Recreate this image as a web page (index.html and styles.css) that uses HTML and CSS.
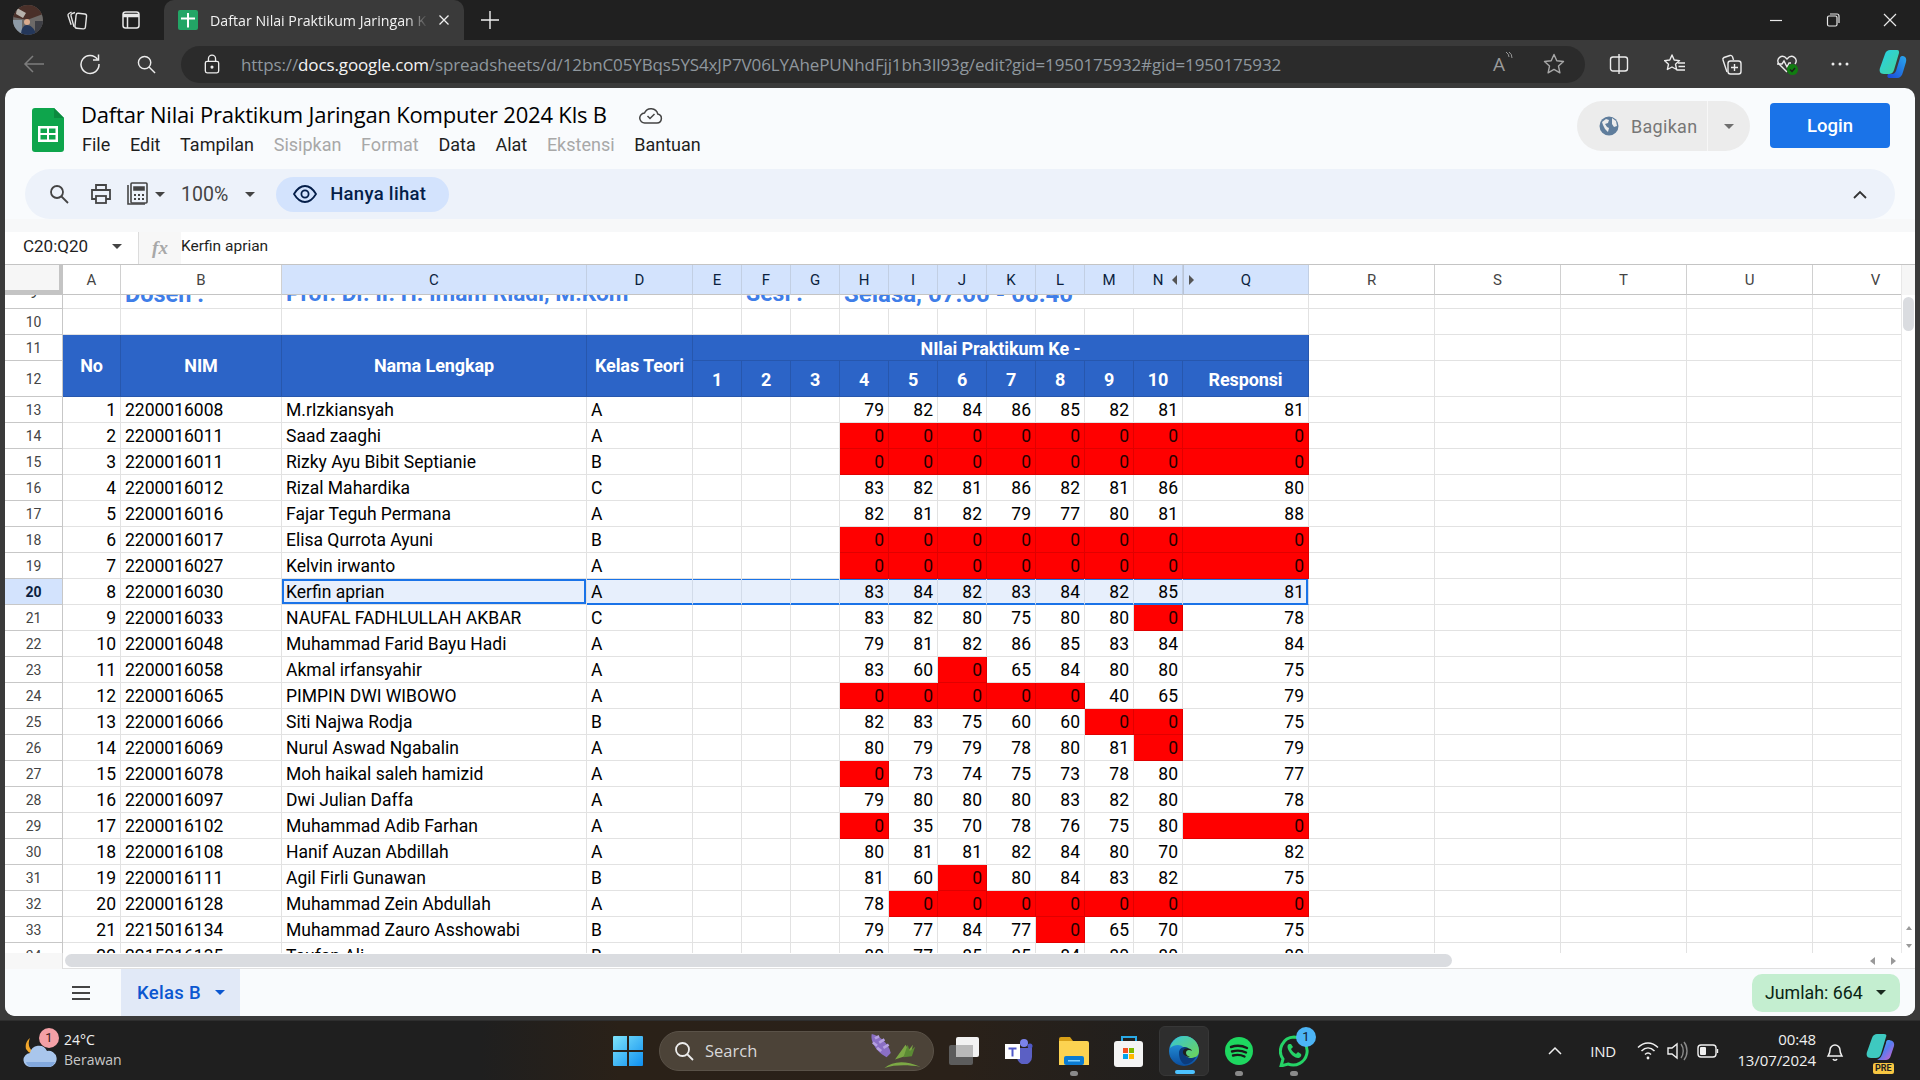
FILE: index.html
```html
<!DOCTYPE html>
<html lang="id">
<head>
<meta charset="utf-8">
<title>Daftar Nilai Praktikum Jaringan Komputer 2024 Kls B</title>
<link rel="stylesheet" href="styles.css">
</head>
<body>
<div class="tabbar">
  <div class="avatar"><svg viewBox="0 0 30 30" width="30" height="30"><defs><clipPath id="av"><circle cx="15" cy="15" r="15"/></clipPath></defs><g clip-path="url(#av)"><rect width="30" height="30" fill="#6d6a68"/><path d="M0 0h30v9L14 15 0 12z" fill="#4a3029"/><path d="M4 3l9 5-3 5-7-4z" fill="#b7b2ac"/><rect x="0" y="15" width="9" height="15" fill="#8d9aa6"/><circle cx="14" cy="17" r="3" fill="#d9ab8e"/><path d="M8 30c0-7 3-10 6-10s8 3 9 10z" fill="#24375a"/><rect x="22" y="16" width="8" height="14" fill="#3e3f45"/></g></svg></div>
  <div class="tb-btn tb-coll"><svg viewBox="0 0 24 24" width="24" height="24" fill="none" stroke="#e4e4e4" stroke-width="1.4"><rect x="10.5" y="5.5" width="10.5" height="15" rx="2" transform="rotate(6 15 13)"/><path d="M10 4.5l-3 1.2c-1 .5-1.3 1.2-1 2.2l3 11M6.6 4L4 5.5c-1 .6-1.2 1.3-.9 2.2l3 9"/></svg></div>
  <div class="tb-btn tb-view"><svg viewBox="0 0 20 20" width="20" height="20" fill="none" stroke="#e8e8e8" stroke-width="1.5"><rect x="2" y="2" width="16" height="16" rx="2.5"/><path d="M2 5.5h16" stroke-width="3.5"/><path d="M6.5 6v12"/></svg></div>
  <div class="tab">
    <svg class="favicon" viewBox="0 0 20 20" width="20" height="20"><rect width="20" height="20" rx="2" fill="#23a566"/><path d="M3 7.5h14v2H11v8H9v-8H3z" fill="#fff"/><rect x="9" y="3" width="2" height="5" fill="#fff"/></svg>
    <span class="tab-title">Daftar Nilai Praktikum Jaringan K</span>
    <svg class="tab-x" viewBox="0 0 12 12" width="12" height="12" fill="none" stroke="#f0f0f0" stroke-width="1.3"><path d="M1.5 1.5l9 9M10.5 1.5l-9 9"/></svg>
  </div>
  <svg class="tab-plus" viewBox="0 0 18 18" width="18" height="18" fill="none" stroke="#f0f0f0" stroke-width="1.4"><path d="M9 0v18M0 9h18"/></svg>
  <div class="win-ctrl">
    <svg viewBox="0 0 14 14" width="14" height="14" fill="none" stroke="#e8e8e8" stroke-width="1.2"><path d="M1 7.5h12"/></svg>
    <svg viewBox="0 0 14 14" width="14" height="14" fill="none" stroke="#e8e8e8" stroke-width="1.2"><rect x="1.5" y="3" width="9.5" height="10" rx="1.5"/><path d="M4 1h7a2 2 0 012 2v7"/></svg>
    <svg viewBox="0 0 14 14" width="14" height="14" fill="none" stroke="#e8e8e8" stroke-width="1.2"><path d="M1 1l12 12M13 1L1 13"/></svg>
  </div>
</div>

<div class="addrbar">
  <div class="nav-btn"><svg viewBox="0 0 22 20" width="22" height="20" fill="none" stroke="#7d7d7d" stroke-width="1.5"><path d="M21 10H2M10 2l-8 8 8 8"/></svg></div>
  <div class="nav-btn"><svg viewBox="0 0 22 22" width="22" height="22" fill="none" stroke="#ececec" stroke-width="1.5"><path d="M18.5 6.5A9 9 0 1020 11"/><path d="M19.5 1.5v5.5H14"/></svg></div>
  <div class="nav-btn"><svg viewBox="0 0 20 20" width="19" height="19" fill="none" stroke="#ececec" stroke-width="1.5"><circle cx="8" cy="8" r="6.5"/><path d="M12.7 12.7L19 19"/></svg></div>
  <div class="url-pill">
    <svg class="lock" viewBox="0 0 18 22" width="16" height="20" fill="none" stroke="#ececec" stroke-width="1.5"><rect x="1.5" y="8" width="15" height="13" rx="2"/><path d="M5 8V5a4 4 0 018 0v3"/><circle cx="9" cy="14.5" r="1" fill="#ececec"/></svg>
    <span class="url"><span class="url-dim">https://</span><span class="url-host">docs.google.com</span><span class="url-dim">/spreadsheets/d/12bnC05YBqs5YS4xJP7V06LYAhePUNhdFjj1bh3Il93g/edit?gid=1950175932#gid=1950175932</span></span>
    <span class="read-aloud">A<svg viewBox="0 0 8 12" width="8" height="12" fill="none" stroke="#9a9a9a" stroke-width="1"><path d="M1 1q3 2 3 5M4 1q3 2 3 6"/></svg></span>
    <svg class="url-star" viewBox="0 0 22 22" width="22" height="22" fill="none" stroke="#a8a8a8" stroke-width="1.4" stroke-linejoin="round"><path d="M11 1.5l2.8 6.3 6.7.7-5 4.6 1.4 6.7L11 16.4l-5.9 3.4 1.4-6.7-5-4.6 6.7-.7z"/></svg>
  </div>
  <div class="ext-group">
    <div class="ext-btn"><svg viewBox="0 0 20 20" width="20" height="20" fill="none" stroke="#ececec" stroke-width="1.4"><rect x="1.5" y="3" width="17" height="14" rx="2.5"/><path d="M10 0v20"/></svg></div>
    <div class="ext-btn"><svg viewBox="0 0 22 20" width="22" height="20" fill="none" stroke="#ececec" stroke-width="1.4" stroke-linejoin="round"><path d="M8 1l2.2 5 5.3.6-4 3.6 1.1 5.3L8 13l-4.6 2.5 1.1-5.3-4-3.6L5.8 6z"/><path d="M14 9h7M14.5 12.5h6.5M12.5 16h8.5"/></svg></div>
    <div class="ext-btn"><svg viewBox="0 0 22 22" width="22" height="22" fill="none" stroke="#ececec" stroke-width="1.4"><path d="M7 19L3 7c-.4-1 0-2 1-2.500L10 2.500c1-.3 2 .2 2.500 1.200L13.500 7"/><rect x="8" y="8" width="13" height="13" rx="2.5"/><path d="M14.5 11v7M11 14.5h7"/></svg></div>
    <div class="ext-btn"><svg viewBox="0 0 24 24" width="24" height="24" fill="none" stroke="#ececec" stroke-width="1.4"><path d="M12 20L4 12c-4-5 3-11 8-5 5-6 12 0 8 5"/><path d="M2 12h5l2-3 3 6 2-4h2"/><circle cx="17.5" cy="17.5" r="5.5" fill="#107c10" stroke="none"/><path d="M15 17.5l2 2 3-3.500" stroke="#1c1c1c"/></svg></div>
    <div class="ext-btn ext-dots"><svg viewBox="0 0 18 4" width="18" height="4" fill="#ececec"><circle cx="2" cy="2" r="1.5"/><circle cx="9" cy="2" r="1.5"/><circle cx="16" cy="2" r="1.5"/></svg></div>
    <div class="ext-btn ext-copilot"><svg viewBox="0 0 30 30" width="30" height="30"><defs><linearGradient id="cpa" x1="0" y1="0" x2="1" y2="1"><stop offset="0" stop-color="#27d0e8"/><stop offset="1" stop-color="#43d49a"/></linearGradient><linearGradient id="cpb" x1="1" y1="0" x2="0" y2="1"><stop offset="0" stop-color="#2aa8ec"/><stop offset="1" stop-color="#1a47d8"/></linearGradient></defs><path d="M12 1h7c2 0 2 1 2 3l-5 17c-1 3-3 4-5 4H6c-4 0-5-3-4-6L7 5c1-3 3-4 5-4z" fill="url(#cpa)"/><path d="M24 7c3 0 5 2 4 6l-3 10c-1 4-3 6-6 6h-7c-3 0-3-2-2-4h4c2 0 3-1 4-3l4-13c0-1 1-2 2-2z" fill="url(#cpb)"/></svg></div>
  </div>
</div>

<main class="window">
  <header class="appbar">
    <svg class="sheets-logo" viewBox="0 0 32 44" width="32" height="44"><path d="M3 0h19l10 10v31a3 3 0 01-3 3H3a3 3 0 01-3-3V3a3 3 0 013-3z" fill="#0ea54c"/><path d="M22 0l10 10H22z" fill="#0b8a3f"/><path d="M6 18h20v16H6z" fill="#fff"/><path d="M8.5 20.5h6.5V25H8.500zM17 20.5h6.500V25H17zM8.500 27H15v4.500H8.500zM17 27h6.500v4.500H17z" fill="#0ea54c"/></svg>
    <div class="doc-head">
      <div class="doc-title-row">
        <span class="doc-title">Daftar Nilai Praktikum Jaringan Komputer 2024 Kls B</span>
        <svg class="cloud" viewBox="0 0 24 20" width="24" height="20" fill="none" stroke="#444" stroke-width="1.5"><path d="M6 18h12a4.500 4.500 0 00.8-8.900A7 7 0 005.500 8 5 5 0 006 18z"/><path d="M8.500 11l2.500 2.500 4.500-4.500"/></svg>
      </div>
      <nav class="menu">
        <span>File</span><span>Edit</span><span>Tampilan</span><span class="off">Sisipkan</span><span class="off">Format</span><span>Data</span><span>Alat</span><span class="off">Ekstensi</span><span>Bantuan</span>
      </nav>
    </div>
    <div class="share">
      <div class="share-main"><svg viewBox="0 0 20 20" width="20" height="20"><circle cx="10" cy="10" r="9.5" fill="#5f7d9c"/><path d="M3 6l4-3 3 1-1 3-3 1 2 3 2 1-1 4-3-3-2-4zM13 2l4 3 1 5-3 1-2-3z" fill="#ececec"/></svg><span>Bagikan</span></div>
      <div class="share-caret"><i class="caret caret-gray"></i></div>
    </div>
    <button class="login">Login</button>
  </header>

  <div class="toolbar">
    <svg class="tool t-search" viewBox="0 0 20 20" width="20" height="20" fill="none" stroke="#444" stroke-width="1.8"><circle cx="8" cy="8" r="6"/><path d="M12.5 12.5L19 19"/></svg>
    <svg class="tool t-print" viewBox="0 0 22 22" width="22" height="22" fill="none" stroke="#444" stroke-width="1.8"><path d="M6 7V2h10v5M6 16H2V7h18v9h-4"/><rect x="6" y="13" width="10" height="7"/></svg>
    <svg class="tool t-calc" viewBox="0 0 22 24" width="22" height="24" fill="none" stroke="#444" stroke-width="1.6"><path d="M2 3v19h17"/><rect x="5" y="1" width="16" height="20" rx="1"/><path d="M8 5h10v3H8z" fill="#444"/><path d="M8 12h2v2H8zM12 12h2v2h-2zM16 12h2v2h-2zM8 16h2v2H8zM12 16h2v2h-2zM16 16h2v2h-2z" fill="#444" stroke="none"/></svg>
    <i class="caret caret-dark t-caret1"></i>
    <span class="zoom-val">100%</span>
    <i class="caret caret-dark t-caret2"></i>
    <div class="view-pill">
      <svg viewBox="0 0 24 18" width="24" height="18" fill="none" stroke="#041e49" stroke-width="1.8"><path d="M1 9c3-5 7-8 11-8s8 3 11 8c-3 5-7 8-11 8S4 14 1 9z"/><circle cx="12" cy="9" r="3.6"/></svg>
      <span>Hanya lihat</span>
    </div>
    <svg class="t-chevron" viewBox="0 0 14 9" width="14" height="9" fill="none" stroke="#333" stroke-width="1.8"><path d="M1 8l6-6 6 6"/></svg>
  </div>

  <div class="formula">
    <div class="namebox"><span>C20:Q20</span><i class="caret caret-dark"></i></div>
    <div class="fx"><span>fx</span></div>
    <div class="formula-text">Kerfin aprian</div>
  </div>

  <div class="sheet">
    <div class="viewport">
      <table class="grid">
        <colgroup>
          <col class="c-head"><col class="c-a"><col class="c-b"><col class="c-c"><col class="c-d">
          <col class="c-s"><col class="c-s"><col class="c-s"><col class="c-s"><col class="c-s"><col class="c-s"><col class="c-s"><col class="c-s"><col class="c-s"><col class="c-s">
          <col class="c-w"><col class="c-w"><col class="c-w"><col class="c-w"><col class="c-w"><col class="c-w">
        </colgroup>
        <thead>
          <tr class="r-cols">
            <th class="corner"></th><th>A</th><th>B</th><th class="sel">C</th><th class="sel">D</th><th class="sel">E</th><th class="sel">F</th><th class="sel">G</th><th class="sel">H</th><th class="sel">I</th><th class="sel">J</th><th class="sel">K</th><th class="sel">L</th><th class="sel">M</th><th class="sel hid-n">N<i class="arrow-l"></i></th><th class="sel hid-q"><i class="arrow-r"></i>Q</th><th>R</th><th>S</th><th>T</th><th>U</th><th>V</th>
          </tr>
        </thead>
        <tbody>
          <tr class="r-9"><th><div class="clip"><span class="rn9">9</span></div></th><td></td><td><div class="clip"><span class="big big-dosen">Dosen :</span></div></td><td colspan="2"><div class="clip"><span class="big big-prof">Prof. Dr. Ir. H. Imam Riadi, M.Kom</span></div></td><td></td><td colspan="2"><div class="clip"><span class="big">Sesi :</span></div></td><td colspan="7"><div class="clip"><span class="big big-sesi">Selasa, 07:00 - 08:40</span></div></td><td></td><td></td><td></td><td></td><td></td><td></td></tr>
          <tr class="r-10"><th>10</th><td></td><td></td><td></td><td></td><td></td><td></td><td></td><td></td><td></td><td></td><td></td><td></td><td></td><td></td><td></td><td></td><td></td><td></td><td></td><td></td></tr>
          <tr class="r-11"><th>11</th><td class="hd" rowspan="2">No</td><td class="hd" rowspan="2">NIM</td><td class="hd" rowspan="2">Nama Lengkap</td><td class="hd" rowspan="2">Kelas Teori</td><td class="hd" colspan="11">NIlai Praktikum Ke -</td><td></td><td></td><td></td><td></td><td></td></tr>
          <tr class="r-12"><th>12</th><td class="hd">1</td><td class="hd">2</td><td class="hd">3</td><td class="hd">4</td><td class="hd">5</td><td class="hd">6</td><td class="hd">7</td><td class="hd">8</td><td class="hd">9</td><td class="hd">10</td><td class="hd">Responsi</td><td></td><td></td><td></td><td></td><td></td></tr>
          <tr><th>13</th><td class="n">1</td><td>2200016008</td><td>M.rIzkiansyah</td><td>A</td><td></td><td></td><td></td><td class="n">79</td><td class="n">82</td><td class="n">84</td><td class="n">86</td><td class="n">85</td><td class="n">82</td><td class="n">81</td><td class="n">81</td><td></td><td></td><td></td><td></td><td></td></tr>
          <tr><th>14</th><td class="n">2</td><td>2200016011</td><td>Saad zaaghi</td><td>A</td><td></td><td></td><td></td><td class="z">0</td><td class="z">0</td><td class="z">0</td><td class="z">0</td><td class="z">0</td><td class="z">0</td><td class="z">0</td><td class="z">0</td><td></td><td></td><td></td><td></td><td></td></tr>
          <tr><th>15</th><td class="n">3</td><td>2200016011</td><td>Rizky Ayu Bibit Septianie</td><td>B</td><td></td><td></td><td></td><td class="z">0</td><td class="z">0</td><td class="z">0</td><td class="z">0</td><td class="z">0</td><td class="z">0</td><td class="z">0</td><td class="z">0</td><td></td><td></td><td></td><td></td><td></td></tr>
          <tr><th>16</th><td class="n">4</td><td>2200016012</td><td>Rizal Mahardika</td><td>C</td><td></td><td></td><td></td><td class="n">83</td><td class="n">82</td><td class="n">81</td><td class="n">86</td><td class="n">82</td><td class="n">81</td><td class="n">86</td><td class="n">80</td><td></td><td></td><td></td><td></td><td></td></tr>
          <tr><th>17</th><td class="n">5</td><td>2200016016</td><td>Fajar Teguh Permana</td><td>A</td><td></td><td></td><td></td><td class="n">82</td><td class="n">81</td><td class="n">82</td><td class="n">79</td><td class="n">77</td><td class="n">80</td><td class="n">81</td><td class="n">88</td><td></td><td></td><td></td><td></td><td></td></tr>
          <tr><th>18</th><td class="n">6</td><td>2200016017</td><td>Elisa Qurrota Ayuni</td><td>B</td><td></td><td></td><td></td><td class="z">0</td><td class="z">0</td><td class="z">0</td><td class="z">0</td><td class="z">0</td><td class="z">0</td><td class="z">0</td><td class="z">0</td><td></td><td></td><td></td><td></td><td></td></tr>
          <tr><th>19</th><td class="n">7</td><td>2200016027</td><td>Kelvin irwanto</td><td>A</td><td></td><td></td><td></td><td class="z">0</td><td class="z">0</td><td class="z">0</td><td class="z">0</td><td class="z">0</td><td class="z">0</td><td class="z">0</td><td class="z">0</td><td></td><td></td><td></td><td></td><td></td></tr>
          <tr class="r-sel"><th>20</th><td class="n">8</td><td>2200016030</td><td class="active">Kerfin aprian</td><td class="rng">A</td><td class="rng"></td><td class="rng"></td><td class="rng"></td><td class="rng n">83</td><td class="rng n">84</td><td class="rng n">82</td><td class="rng n">83</td><td class="rng n">84</td><td class="rng n">82</td><td class="rng n">85</td><td class="rng n end">81</td><td></td><td></td><td></td><td></td><td></td></tr>
          <tr><th>21</th><td class="n">9</td><td>2200016033</td><td>NAUFAL FADHLULLAH AKBAR</td><td>C</td><td></td><td></td><td></td><td class="n">83</td><td class="n">82</td><td class="n">80</td><td class="n">75</td><td class="n">80</td><td class="n">80</td><td class="z">0</td><td class="n">78</td><td></td><td></td><td></td><td></td><td></td></tr>
          <tr><th>22</th><td class="n">10</td><td>2200016048</td><td>Muhammad Farid Bayu Hadi</td><td>A</td><td></td><td></td><td></td><td class="n">79</td><td class="n">81</td><td class="n">82</td><td class="n">86</td><td class="n">85</td><td class="n">83</td><td class="n">84</td><td class="n">84</td><td></td><td></td><td></td><td></td><td></td></tr>
          <tr><th>23</th><td class="n">11</td><td>2200016058</td><td>Akmal irfansyahir</td><td>A</td><td></td><td></td><td></td><td class="n">83</td><td class="n">60</td><td class="z">0</td><td class="n">65</td><td class="n">84</td><td class="n">80</td><td class="n">80</td><td class="n">75</td><td></td><td></td><td></td><td></td><td></td></tr>
          <tr><th>24</th><td class="n">12</td><td>2200016065</td><td>PIMPIN DWI WIBOWO</td><td>A</td><td></td><td></td><td></td><td class="z">0</td><td class="z">0</td><td class="z">0</td><td class="z">0</td><td class="z">0</td><td class="n">40</td><td class="n">65</td><td class="n">79</td><td></td><td></td><td></td><td></td><td></td></tr>
          <tr><th>25</th><td class="n">13</td><td>2200016066</td><td>Siti Najwa Rodja</td><td>B</td><td></td><td></td><td></td><td class="n">82</td><td class="n">83</td><td class="n">75</td><td class="n">60</td><td class="n">60</td><td class="z">0</td><td class="z">0</td><td class="n">75</td><td></td><td></td><td></td><td></td><td></td></tr>
          <tr><th>26</th><td class="n">14</td><td>2200016069</td><td>Nurul Aswad Ngabalin</td><td>A</td><td></td><td></td><td></td><td class="n">80</td><td class="n">79</td><td class="n">79</td><td class="n">78</td><td class="n">80</td><td class="n">81</td><td class="z">0</td><td class="n">79</td><td></td><td></td><td></td><td></td><td></td></tr>
          <tr><th>27</th><td class="n">15</td><td>2200016078</td><td>Moh haikal saleh hamizid</td><td>A</td><td></td><td></td><td></td><td class="z">0</td><td class="n">73</td><td class="n">74</td><td class="n">75</td><td class="n">73</td><td class="n">78</td><td class="n">80</td><td class="n">77</td><td></td><td></td><td></td><td></td><td></td></tr>
          <tr><th>28</th><td class="n">16</td><td>2200016097</td><td>Dwi Julian Daffa</td><td>A</td><td></td><td></td><td></td><td class="n">79</td><td class="n">80</td><td class="n">80</td><td class="n">80</td><td class="n">83</td><td class="n">82</td><td class="n">80</td><td class="n">78</td><td></td><td></td><td></td><td></td><td></td></tr>
          <tr><th>29</th><td class="n">17</td><td>2200016102</td><td>Muhammad Adib Farhan</td><td>A</td><td></td><td></td><td></td><td class="z">0</td><td class="n">35</td><td class="n">70</td><td class="n">78</td><td class="n">76</td><td class="n">75</td><td class="n">80</td><td class="z">0</td><td></td><td></td><td></td><td></td><td></td></tr>
          <tr><th>30</th><td class="n">18</td><td>2200016108</td><td>Hanif Auzan Abdillah</td><td>A</td><td></td><td></td><td></td><td class="n">80</td><td class="n">81</td><td class="n">81</td><td class="n">82</td><td class="n">84</td><td class="n">80</td><td class="n">70</td><td class="n">82</td><td></td><td></td><td></td><td></td><td></td></tr>
          <tr><th>31</th><td class="n">19</td><td>2200016111</td><td>Agil Firli Gunawan</td><td>B</td><td></td><td></td><td></td><td class="n">81</td><td class="n">60</td><td class="z">0</td><td class="n">80</td><td class="n">84</td><td class="n">83</td><td class="n">82</td><td class="n">75</td><td></td><td></td><td></td><td></td><td></td></tr>
          <tr><th>32</th><td class="n">20</td><td>2200016128</td><td>Muhammad Zein Abdullah</td><td>A</td><td></td><td></td><td></td><td class="n">78</td><td class="z">0</td><td class="z">0</td><td class="z">0</td><td class="z">0</td><td class="z">0</td><td class="z">0</td><td class="z">0</td><td></td><td></td><td></td><td></td><td></td></tr>
          <tr><th>33</th><td class="n">21</td><td>2215016134</td><td>Muhammad Zauro Asshowabi</td><td>B</td><td></td><td></td><td></td><td class="n">79</td><td class="n">77</td><td class="n">84</td><td class="n">77</td><td class="z">0</td><td class="n">65</td><td class="n">70</td><td class="n">75</td><td></td><td></td><td></td><td></td><td></td></tr>
          <tr><th>34</th><td class="n">22</td><td>2215016135</td><td>Taufan Ali</td><td>B</td><td></td><td></td><td></td><td class="n">80</td><td class="n">77</td><td class="n">85</td><td class="n">85</td><td class="n">84</td><td class="n">80</td><td class="n">80</td><td class="n">80</td><td></td><td></td><td></td><td></td><td></td></tr>
        </tbody>
      </table>
    </div>
    <div class="vscroll">
      <div class="vthumb"></div>
      <div class="varrows"><i class="tri-up"></i><i class="tri-down"></i></div>
    </div>
  </div>
  <div class="hscroll">
    <div class="hs-corner"></div>
    <div class="hthumb"></div>
    <div class="harrows"><i class="arrow-l"></i><i class="arrow-r"></i></div>
  </div>

  <footer class="sheetbar">
    <svg class="hamburger" viewBox="0 0 18 14" width="18" height="14" fill="#444"><rect width="18" height="2"/><rect y="6" width="18" height="2"/><rect y="12" width="18" height="2"/></svg>
    <div class="sheet-tab"><span>Kelas B</span><i class="caret caret-blue"></i></div>
    <div class="sum"><span>Jumlah: 664</span><i class="caret caret-black"></i></div>
  </footer>
</main>

<div class="taskbar">
  <div class="weather">
    <div class="w-icon">
      <svg viewBox="0 0 34 36" width="34" height="36"><path d="M7 4a11 11 0 008 16 11 11 0 01-12-5A11 11 0 017 4z" fill="#f0a62c"/><path d="M8 33a7 7 0 01-1-14 9 9 0 0117-2 8 8 0 013 16z" fill="#a9c6ec"/><path d="M8 33a7 7 0 01-5-5h29a8 8 0 01-5 5z" fill="#83a9de"/></svg>
      <span class="w-badge">1</span>
    </div>
    <div class="w-text"><span class="w-temp">24°C</span><span class="w-desc">Berawan</span></div>
  </div>
  <div class="tb-center">
    <svg class="win-logo" viewBox="0 0 30 30" width="30" height="30"><defs><linearGradient id="win" x1="0" y1="0" x2="1" y2="1"><stop offset="0" stop-color="#7ee4fb"/><stop offset="1" stop-color="#0e8ff0"/></linearGradient></defs><path d="M0 1a1 1 0 011-1h13v14H0zM16 0h13a1 1 0 011 1v13H16zM0 16h14v14H1a1 1 0 01-1-1zM16 16h14v13a1 1 0 01-1 1H16z" fill="url(#win)"/></svg>
    <div class="task-search">
      <svg viewBox="0 0 20 20" width="20" height="20" fill="none" stroke="#ededed" stroke-width="1.8"><circle cx="8.5" cy="8.5" r="6.5"/><path d="M13 13l6 6"/></svg>
      <span>Search</span>
      <svg class="flower" viewBox="0 0 52 36" width="60" height="38"><path d="M4 2c6 1 16 8 18 18l-4 4C10 20 2 10 4 2z" fill="#8a6fc4"/><path d="M7 6l4-2M11 10l5-3M15 15l5-3M5 10l4 3M9 15l4 3" stroke="#b5a0e0" stroke-width="2.5"/><path d="M16 34c8-6 18-8 34-1-12-2-24-2-34 1zM26 26l10-14 3 5 4-5-2 9z" fill="#7ca845"/><path d="M34 24l4-12 2 6 5-4-3 9z" fill="#5b8a34"/></svg>
    </div>
    <div class="task-app"><svg viewBox="0 0 30 28" width="30" height="28"><rect y="8" width="24" height="20" rx="2" fill="#5c5c5c"/><rect x="7" width="23" height="20" rx="2" fill="#f2f2f2"/><rect x="7" y="8" width="17" height="12" fill="#b9b9b9"/></svg></div>
    <div class="task-app"><svg viewBox="0 0 28 26" width="28" height="26"><circle cx="19" cy="5" r="4" fill="#7b83eb"/><circle cx="25" cy="8" r="2.5" fill="#5059c9"/><path d="M12 10h15v9a7 7 0 01-15 0z" fill="#5b60c4"/><rect y="6" width="15" height="15" fill="#fff"/><path d="M3.5 9.5h8v2h-3v7h-2v-7h-3z" fill="#5059c9"/></svg></div>
    <div class="task-app has-dot"><svg viewBox="0 0 30 28" width="30" height="28"><path d="M0 2a2 2 0 012-2h9l3 4H0z" fill="#d8a017"/><path d="M0 4h28a2 2 0 012 2v22H0z" fill="#fcd351"/><rect x="5" y="19" width="20" height="9" rx="2" fill="#0a7bd2"/><rect x="9" y="23" width="12" height="1.5" fill="#7ed0ff"/></svg></div>
    <div class="task-app"><svg viewBox="0 0 30 32" width="30" height="32"><path d="M8 8V2h14v6" fill="none" stroke="#29a9e6" stroke-width="2"/><rect y="6" width="29" height="26" rx="3" fill="#f4f4f4"/><path d="M9 13h5v5H9z" fill="#f25022"/><path d="M15 13h5v5h-5z" fill="#7fba00"/><path d="M9 19h5v5H9z" fill="#00a4ef"/><path d="M15 19h5v5h-5z" fill="#ffb900"/></svg></div>
    <div class="task-app active"><svg viewBox="0 0 30 30" width="30" height="30"><defs><linearGradient id="edgeb" x1="0" y1="0" x2="0" y2="1"><stop offset="0" stop-color="#2aa4ea"/><stop offset="1" stop-color="#0b4d9e"/></linearGradient><linearGradient id="edgeg" x1="0" y1="0" x2="1" y2="1"><stop offset="0" stop-color="#36c6d8"/><stop offset="1" stop-color="#6fd452"/></linearGradient></defs><circle cx="15" cy="15" r="15" fill="url(#edgeb)"/><path d="M1 12C3 4 9 0 15 0c9 0 15 7 15 15 0 5-4 7-8 7-5 0-7-2-7-4 0-1 1-2 1-3 0-3-3-6-7-6-3 0-6 1-8 3z" fill="url(#edgeg)"/><path d="M10 17c0-4 3-6 6-6 2 0 4 1 4 3-4-1-5 3-3 6 2 2 6 3 10 1-3 5-8 8-12 7-3-2-5-6-5-11z" fill="#0c3b7c"/><path d="M14 15c2-4 8-3 9 0-3-2-6-1-6 2 0 2 2 3 4 4-3 0-8-2-7-6z" fill="#1f1f1f"/></svg></div>
    <div class="task-app has-dot"><svg viewBox="0 0 28 28" width="28" height="28"><circle cx="14" cy="14" r="14" fill="#1ed760"/><path d="M6 10c6-2 11-1.500 16 1M7 14.500c5-1.500 10-1 14 1M8 18.500c4-1 8-.7 11.500 1" fill="none" stroke="#191919" stroke-width="2.4" stroke-linecap="round"/></svg></div>
    <div class="task-app has-dot wa"><svg viewBox="0 0 30 32" width="30" height="32"><path d="M15 2a14 14 0 00-11 22L2 31l7-2A14 14 0 1015 2z" fill="none" stroke="#25d366" stroke-width="3"/><path d="M10 9c-2 1-2 4 0 7 2 4 6 7 9 7 2 0 4-2 3-4l-3-2-2 2c-2-1-4-3-5-5l2-2-2-3z" fill="#25d366"/></svg><span class="wa-badge">1</span></div>
  </div>
  <div class="tray">
    <svg viewBox="0 0 14 9" width="14" height="9" fill="none" stroke="#f0f0f0" stroke-width="1.5"><path d="M1 8l6-6 6 6"/></svg>
    <span class="ime">IND</span>
    <svg class="wifi" viewBox="0 0 22 20" width="22" height="20" fill="none" stroke="#f0f0f0" stroke-width="1.5"><path d="M1 6.500c6-6 14-6 20 0M4.500 10c4-4 9-4 13 0M8 13.500c2-2 4-2 6 0"/><circle cx="11" cy="17" r="1.4" fill="#f0f0f0" stroke="none"/></svg>
    <svg class="vol" viewBox="0 0 22 22" width="22" height="22" fill="none" stroke="#f0f0f0" stroke-width="1.4"><path d="M2 8v6h4l5 4V4L6 8z"/><path d="M15 4c3 4 3 10 0 14M18 2c4 5 4 13 0 18" stroke="#8a8a8a"/></svg>
    <svg class="batt" viewBox="0 0 22 14" width="22" height="14" fill="none" stroke="#f0f0f0" stroke-width="1.4"><rect x="1" y="1" width="18" height="12" rx="3"/><rect x="3" y="3" width="6" height="8" rx="1" fill="#f0f0f0" stroke="none"/><path d="M20.500 5v4"/></svg>
    <div class="clock"><span>00:48</span><span>13/07/2024</span></div>
    <svg class="bell" viewBox="0 0 18 22" width="18" height="22" fill="none" stroke="#f0f0f0" stroke-width="1.5"><path d="M2 16c1-2 2-3 2-6a5 5 0 0110 0c0 3 1 4 2 6zM7 19c.6 1.500 3.400 1.500 4 0"/></svg>
    <div class="copilot-pre">
      <svg viewBox="0 0 30 32" width="30" height="32"><defs><linearGradient id="cq" x1="0" y1="0" x2="1" y2="1"><stop offset="0" stop-color="#38c6ee"/><stop offset=".5" stop-color="#5a7bf0"/><stop offset="1" stop-color="#e060c8"/></linearGradient></defs><path d="M11 1h7c2 0 3 1 2 3l-5 17c-1 3-3 4-5 4H5c-4 0-5-3-4-6L6 5c1-3 3-4 5-4z" fill="#3ec9c0"/><path d="M22 7c4 0 7 2 6 6l-3 9c-1 4-3 5-6 5h-8c4-2 5-5 6-8l3-9c0-2 1-3 2-3z" fill="url(#cq)"/></svg>
      <span>PRE</span>
    </div>
  </div>
</div>
</body>
</html>
```

FILE: styles.css
```css
* { box-sizing: border-box; }
html, body { margin: 0; height: 100%; }
body {
  width: 1920px;
  height: 1080px;
  overflow: hidden;
  display: flex;
  flex-direction: column;
  background: #3a3a3a;
  font-family: "Roboto", "Liberation Sans", sans-serif;
  color: #1f1f1f;
}
i { display: block; font-style: normal; }

/* shared triangles */
.caret { width: 0; height: 0; border-left: 5px solid transparent; border-right: 5px solid transparent; border-top: 5px solid #444; }
.caret-gray { border-top-color: #6f6f6f; }
.caret-dark { border-top-color: #444; }
.caret-blue { border-top-color: #0b57d0; }
.caret-black { border-top-color: #1a2a1f; }
.arrow-l { width: 0; height: 0; border-top: 5px solid transparent; border-bottom: 5px solid transparent; border-right: 5px solid #555; }
.arrow-r { width: 0; height: 0; border-top: 5px solid transparent; border-bottom: 5px solid transparent; border-left: 5px solid #555; }

/* browser tabs */
.tabbar { height: 40px; flex: none; background: #202020; display: flex; align-items: center; }
.avatar { width: 30px; height: 30px; margin-left: 13px; }
.avatar svg { display: block; }
.tb-btn { display: flex; align-items: center; justify-content: center; }
.tb-coll { width: 24px; margin-left: 22px; }
.tb-view { width: 20px; margin-left: 32px; }
.tab { width: 300px; height: 40px; margin-left: 23px; background: #3a3a3a; border-radius: 10px 10px 0 0; display: flex; align-items: center; padding: 0 14px; }
.favicon { flex: none; }
.tab-title { margin-left: 12px; width: 218px; flex: none; overflow: hidden; white-space: nowrap; font: 14.2px "Open Sans", sans-serif; color: #f2f2f2; -webkit-mask-image: linear-gradient(90deg, #000 90%, transparent); mask-image: linear-gradient(90deg, #000 90%, transparent); }
.tab-x { margin-left: 10px; flex: none; }
.tab-plus { margin-left: 17px; }
.win-ctrl { margin-left: auto; display: flex; gap: 43px; margin-right: 23px; align-items: center; }

/* address row */
.addrbar { height: 48px; flex: none; background: #3a3a3a; display: flex; align-items: center; padding-left: 6px; }
.nav-btn { width: 56px; display: flex; justify-content: center; }
.url-pill { width: 1404px; height: 37px; margin-left: 7px; background: #2b2b2b; border-radius: 19px; display: flex; align-items: center; padding-left: 23px; }
.lock { flex: none; }
.url { margin-left: 21px; font: 17px "Open Sans", sans-serif; white-space: nowrap; letter-spacing: -.12px; }
.url-dim { color: #8f979e; }
.url-host { color: #f4f4f4; }
.read-aloud { margin-left: auto; color: #9a9a9a; font: 19px "Open Sans", sans-serif; display: flex; align-items: flex-start; }
.url-star { margin-left: 30px; margin-right: 20px; }
.ext-group { display: flex; margin-left: 6px; }
.ext-btn { width: 56px; display: flex; justify-content: center; align-items: center; }
.ext-dots { width: 50px; }
.ext-copilot { width: 55px; }

/* google sheets window */
.window { flex: none; height: 928px; margin: 0 5px; background: #f9fbfd; border-radius: 10px; overflow: hidden; display: flex; flex-direction: column; }
.appbar { height: 81px; flex: none; display: flex; padding-left: 27px; }
.sheets-logo { margin-top: 20px; flex: none; }
.doc-head { margin-left: 18px; padding-top: 11px; }
.doc-title-row { display: flex; align-items: center; height: 30px; margin-left: -1px; }
.doc-title { font: 22px "Open Sans", "Roboto", sans-serif; color: #000; white-space: nowrap; letter-spacing: -.2px; }
.cloud { margin-left: 32px; margin-top: 1px; }
.menu { display: flex; gap: 19.7px; margin-top: 3px; font-size: 18px; color: #1f1f1f; line-height: 26px; }
.menu .off { color: #a8a8a8; }
.share { margin-left: auto; margin-top: 13px; height: 50px; width: 173px; background: #ececec; border-radius: 25px; display: flex; }
.share-main { width: 131px; display: flex; align-items: center; gap: 12px; padding-left: 22px; border-right: 1px solid #f7f7f7; color: #777; font-size: 18px; letter-spacing: .3px; }
.share-caret { flex: 1; display: flex; align-items: center; justify-content: center; }
.login { width: 120px; height: 45px; margin: 15px 25px 0 20px; border: 0; border-radius: 4px; background: #1a73e8; color: #fff; font: 500 18.5px "Roboto", sans-serif; }

.toolbar { height: 50px; flex: none; margin: 0 20px; background: #edf2fa; border-radius: 25px; display: flex; align-items: center; padding-left: 24px; }
.t-print { margin-left: 21px; }
.t-calc { margin-left: 14px; }
.t-caret1 { margin-left: 7px; }
.zoom-val { margin-left: 16px; font-size: 19.5px; color: #444; }
.t-caret2 { margin-left: 17px; }
.view-pill { margin-left: 21px; width: 173px; height: 35px; background: #d3e3fd; border-radius: 18px; display: flex; align-items: center; gap: 13px; padding-left: 17px; font-weight: 500; font-size: 18.5px; color: #041e49; letter-spacing: .3px; }
.t-chevron { margin-left: auto; margin-right: 28px; }

.formula { height: 45px; flex: none; padding-top: 13px; display: flex; background: linear-gradient(#f7f8f9 13px, #fff 13px); }
.namebox { width: 133px; height: 32px; padding-bottom: 4px; display: flex; align-items: center; padding-left: 18px; font-size: 17px; color: #1f1f1f; }
.namebox .caret { margin-left: 24px; }
.fx { width: 43px; height: 32px; background: #f7f7f7; border-left: 1px solid #dcdcdc; display: flex; align-items: center; justify-content: center; font: italic 700 19px "Liberation Serif", serif; color: #a8a8a8; }
.formula-text { height: 32px; line-height: 28px; font-size: 15.5px; color: #1f1f1f; }

/* grid */
.sheet { height: 689px; flex: none; display: flex; border-top: 1px solid #c4c4c4; background: #fff; }
.viewport { width: 1896px; height: 688px; overflow: hidden; flex: none; }
.grid { border-collapse: separate; border-spacing: 0; table-layout: fixed; width: 1934px; font-size: 17.5px; color: #000; }
.c-head { width: 58px; } .c-a { width: 58px; } .c-b { width: 161px; } .c-c { width: 305px; } .c-d { width: 106px; }
.c-s { width: 49px; } .c-w { width: 126px; }
.grid td, .grid th { padding: 0 4px; height: 26px; border-right: 1px solid #e2e2e2; border-bottom: 1px solid #e2e2e2; white-space: nowrap; overflow: hidden; font-weight: 400; line-height: 24px; }
.grid td { padding-top: 2px; line-height: 23px; vertical-align: top; }
.grid tbody th { background: #fff; color: #444; font-size: 14px; text-align: center; border-bottom-color: #c7c7c7; border-right-color: #c7c7c7; padding: 0; }
.r-cols th { height: 30px; background: #fff; color: #444; font-size: 15px; text-align: center; border-bottom: 1px solid #c4c4c4 !important; border-right: 1px solid #d0d0d0; position: relative; }
.r-cols .sel { background: #d3e3fd; color: #0b1f3e; border-right-color: #c2cfe3; }
.r-cols .corner { background: #f6f6f6; border-right: 4px solid #c4c4c4; border-bottom: 5px solid #c4c4c4 !important; }
.hid-n .arrow-l { position: absolute; right: 5px; top: 10px; }
.hid-q { border-left: 1px solid #b9c4d6; }
.hid-q .arrow-r { position: absolute; left: 5px; top: 10px; }
.grid .r-9 th, .grid .r-9 td { height: 14px; padding: 0 4px; line-height: 13px; }
.clip { height: 13px; overflow: hidden; display: flex; align-items: flex-end; justify-content: flex-start; }
.big { font-weight: 700; font-size: 23px; line-height: 28px; color: #3f7ee8; flex: none; }
.big-dosen { font-size: 23.5px; }
.big-prof { font-size: 22.7px; }
.big-sesi { font-size: 24px; }
.rn9 { display: block; width: 100%; text-align: center; font-size: 14px; line-height: 16px; color: #444; margin-bottom: 7px; flex: none; }
.r-12 td, .r-12 th { height: 36px; }
.grid .hd { background: #2c64c7; color: #fff; font-weight: 700; font-size: 18px; letter-spacing: -.1px; text-align: center; vertical-align: middle; padding-top: 1px; border-right-color: #2757ad; border-bottom-color: #2757ad; }
.grid .hd[rowspan] { padding-top: 0; }
.grid .n { text-align: right; }
.grid .z { text-align: right; background: #f00; border-right-color: #e00000; border-bottom-color: #e00000; color: #200; }
.r-sel th { background: #d3e3fd !important; color: #0b1f3e !important; font-weight: 700 !important; }
.grid .rng { background: #e7effc; box-shadow: inset 0 1px #1a73e8, inset 0 -1px #1a73e8; border-right-color: #d2dbe9; border-bottom-color: #1a73e8; }
.grid .end { box-shadow: inset 0 1px #1a73e8, inset 0 -1px #1a73e8, inset -2px 0 #1a73e8; }
.grid .active { background: #e7effc; box-shadow: inset 0 0 0 2px #1a73e8; }

.vscroll { flex: 1; border-left: 1px solid #e8e8e8; padding: 3px 1px 0 1px; display: flex; flex-direction: column; background: linear-gradient(#f6f6f6 30px, #fff 30px); }
.vthumb { height: 34px; margin-top: 29px; background: #dadce0; border-radius: 7px; }
.varrows { margin-top: auto; display: flex; flex-direction: column; gap: 14px; align-items: center; padding-bottom: 5px; }
.tri-up { width: 0; height: 0; border-left: 3px solid transparent; border-right: 3px solid transparent; border-bottom: 4px solid #999; }
.tri-down { width: 0; height: 0; border-left: 3px solid transparent; border-right: 3px solid transparent; border-top: 4px solid #999; }

.hscroll { height: 16px; flex: none; background: #fff; display: flex; align-items: center; border-bottom: 1px solid #e0e0e0; }
.hs-corner { width: 58px; height: 16px; background: #f7f7f7; border-right: 1px solid #ddd; }
.hthumb { width: 1387px; height: 13px; margin-left: 2px; background: #dadce0; border-radius: 7px; }
.harrows { margin-left: auto; display: flex; gap: 16px; padding-right: 19px; align-items: center; }
.harrows .arrow-l, .harrows .arrow-r { border-top-width: 4px; border-bottom-width: 4px; border-right-color: #999; border-left-color: #999; }

.sheetbar { flex: 1; display: flex; align-items: center; background: #f9fbfd; }
.hamburger { margin-left: 67px; }
.sheet-tab { margin-left: 31px; width: 119px; height: 100%; background: #e1e9f7; display: flex; align-items: center; padding-left: 16px; gap: 14px; color: #0b57d0; font-weight: 500; font-size: 18.5px; letter-spacing: .3px; }
.sum { margin-left: auto; margin-right: 15px; width: 148px; height: 38px; background: #c4eed0; border-radius: 10px; display: flex; align-items: center; padding-left: 13px; gap: 13px; font-size: 17.8px; color: #0a2413; }

/* windows taskbar */
.taskbar { height: 60px; margin-top: 4px; flex: none; background: linear-gradient(90deg, #1f1f1f 0, #1f1f1f 480px, #2a2118 620px, #2a2119 960px, #1f1f1f 1200px); border-top: 1px solid #2e2e2e; display: flex; align-items: center; color: #f0f0f0; }
.weather { width: 613px; flex: none; display: flex; align-items: center; padding-left: 23px; }
.w-icon { width: 34px; height: 36px; position: relative; margin-top: 2px; }
.w-icon svg { display: block; }
.w-badge { position: absolute; left: 16px; top: -6px; width: 20px; height: 20px; border-radius: 50%; background: #f4a0a6; color: #3a1a1a; font-size: 13px; text-align: center; line-height: 20px; }
.w-text { margin-left: 7px; margin-top: -2px; display: flex; flex-direction: column; font: 14px "Open Sans", sans-serif; line-height: 20px; }
.w-desc { color: #c8c8c8; }
.tb-center { display: flex; align-items: center; }
.win-logo { flex: none; }
.task-search { margin-left: 16px; width: 275px; height: 40px; border-radius: 20px; background: #4c4338; border: 1px solid #5a5248; display: flex; align-items: center; padding-left: 14px; font: 16.5px "Open Sans", sans-serif; color: #d8d8d8; }
.task-search span { margin-left: 11px; }
.flower { margin-left: auto; margin-right: 8px; }
.task-app { width: 50px; height: 50px; margin-left: 5px; display: flex; align-items: center; justify-content: center; position: relative; }
.task-search + .task-app { margin-left: 5px; }
.task-app.active { background: #2e2e2e; border-radius: 6px; border: 1px solid #373737; }
.task-app.active::after { content: ""; position: absolute; bottom: 1px; left: 15px; width: 20px; height: 4px; border-radius: 2px; background: #4cc2ff; }
.has-dot::after { content: ""; position: absolute; bottom: 0; left: 21px; width: 8px; height: 5px; border-radius: 3px; background: #8a8a8a; }
.wa-badge { position: absolute; right: 3px; top: 1px; width: 20px; height: 20px; border-radius: 50%; background: #4cb4f5; color: #102030; font-size: 13px; text-align: center; line-height: 20px; }
.tray { margin-left: auto; padding-right: 24px; height: 59px; display: flex; align-items: center; }
.ime { margin-left: 28px; font: 15px "Open Sans", sans-serif; letter-spacing: -.2px; }
.wifi { margin-left: 21px; }
.vol { margin-left: 7px; }
.batt { margin-left: 9px; }
.clock { width: 97px; margin-top: -2px; display: flex; flex-direction: column; align-items: flex-end; font: 15px "Open Sans", sans-serif; line-height: 21px; letter-spacing: -.1px; }
.bell { margin-left: 10px; }
.copilot-pre { margin-left: 22px; position: relative; height: 40px; }
.copilot-pre svg { display: block; margin-top: 2px; }
.copilot-pre span { position: absolute; left: 7px; bottom: -3px; background: #f6c642; color: #222; font-size: 9px; font-weight: 700; padding: 0 2px; border-radius: 2px; line-height: 11px; }
```
